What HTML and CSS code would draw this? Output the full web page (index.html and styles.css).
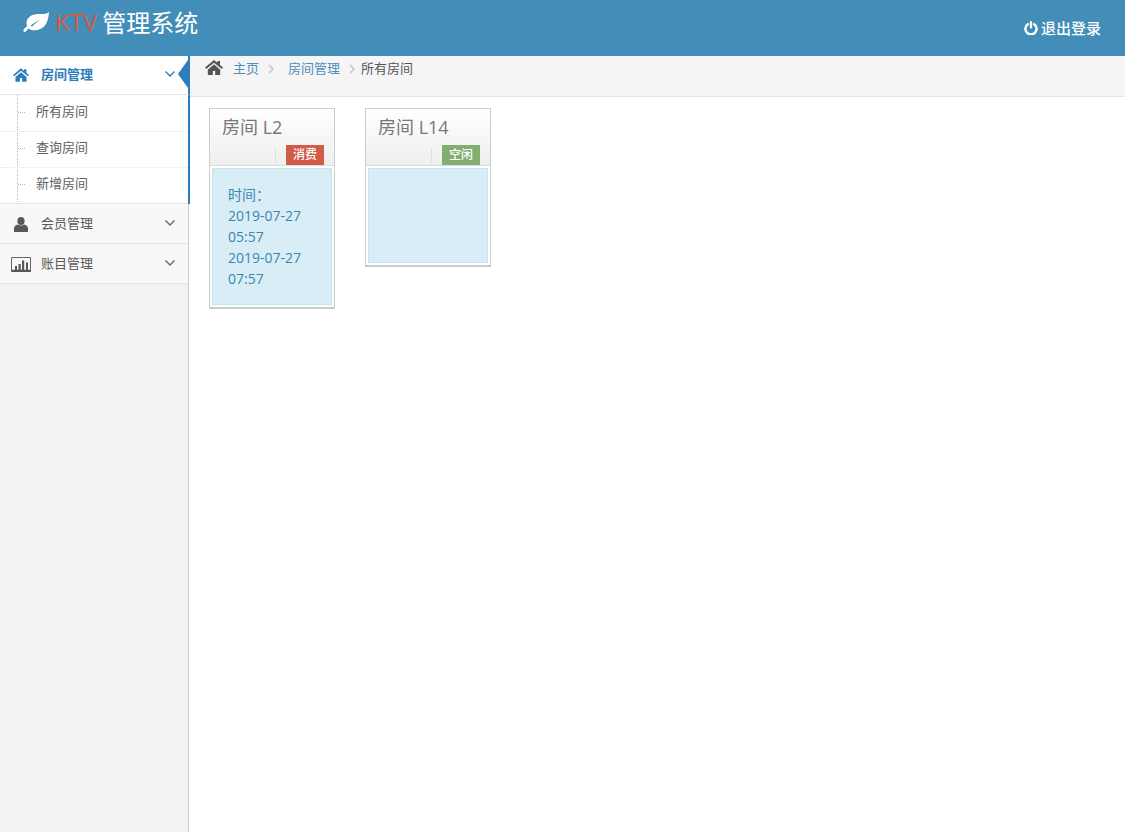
FILE: index.html
```html
<!DOCTYPE html>
<html lang="zh">
<head>
<meta charset="utf-8">
<title>KTV管理系统</title>
<link rel="stylesheet" href="styles.css">
</head>
<body>
<header class="navbar">
  <div class="brand">
    <svg class="leaf" viewBox="0 0 26 20" width="26" height="20"><path fill="#fff" d="M26 0c-3 2.500-6 2-10.500 2C8 2 3.500 6 3.500 11c0 1 .2 2 .6 3C2.800 15 1.600 16.300.6 17.600 0 18.500.5 20 1.800 20c.6 0 1-.3 1.400-.9.700-1 1.500-1.900 2.400-2.700 1.400 1.200 3.400 1.900 5.900 1.800C19.500 18 23 13 24.500 8.500 25.300 6 25.800 3 26 0zM7.500 13.800c2.500-2.400 5.500-4.300 9.500-5.600-3 1.700-5.500 3.600-7.800 6.300z"/></svg>
    <span class="brand-ktv">KTV</span><span class="brand-name">管理系统</span>
  </div>
  <a class="logout">
    <svg viewBox="0 0 14 14" width="14" height="14"><path fill="none" stroke="#fff" stroke-width="2.400" stroke-linecap="round" d="M3.800 3.200A5.600 5.600 0 1 0 10.200 3.200M7 1.200v5"/></svg>
    <span>退出登录</span>
  </a>
</header>
<div class="layout">
  <aside class="sidebar">
    <div class="menu-item active">
      <svg class="menu-icon home" viewBox="0 0 18 15" width="16" height="14"><path fill="#2b7dbc" d="M9 0 0 7.500l1.200 1.500L9 2.800 16.800 9 18 7.500l-3-2.500V1h-2.700v1.800L9 0zM2.800 9.700V15h5v-4h2.400v4h5V9.700L9 4.300 2.800 9.700z"/></svg>
      <span class="menu-label">房间管理</span>
      <svg class="chev" viewBox="0 0 10 6" width="10" height="6"><path fill="none" stroke="#2b7dbc" stroke-width="1.300" d="M.5.500 5 5 9.500.500"/></svg>
      <i class="pointer"></i>
    </div>
    <ul class="submenu">
      <li>所有房间</li>
      <li>查询房间</li>
      <li>新增房间</li>
    </ul>
    <div class="menu-item">
      <svg class="menu-icon person" viewBox="0 0 14 15" width="14" height="15"><ellipse cx="7" cy="4" rx="3.600" ry="4" fill="#585858"/><path fill="#585858" d="M0 15v-3.500C0 9 2 8.300 4 7.500c1.700 1.300 4.300 1.300 6 0 2 .8 4 1.500 4 4V15z"/></svg>
      <span class="menu-label">会员管理</span>
      <svg class="chev" viewBox="0 0 10 6" width="10" height="6"><path fill="none" stroke="#666" stroke-width="1.300" d="M.5.500 5 5 9.500.500"/></svg>
    </div>
    <div class="menu-item">
      <svg class="menu-icon chart" viewBox="0 0 20 15" width="20" height="15"><path fill="none" stroke="#666" stroke-width="1" d="M.5.500h19v14H.5z"/><path fill="#585858" d="M.5 12.800h19V15H.5zM4 9h2v4H4zM7.500 7h2.200v6H7.500zM11 3.500h2.200V13H11zM15 5.500h2V13h-2z"/></svg>
      <span class="menu-label">账目管理</span>
      <svg class="chev" viewBox="0 0 10 6" width="10" height="6"><path fill="none" stroke="#666" stroke-width="1.300" d="M.5.500 5 5 9.500.500"/></svg>
    </div>
  </aside>
  <main class="content">
    <nav class="breadcrumbs">
      <svg class="crumb-home" viewBox="0 0 18 15" width="18" height="15"><path fill="#555" d="M9 0 0 7.500l1.200 1.500L9 2.800 16.800 9 18 7.500l-3-2.500V1h-2.700v1.800L9 0zM2.800 9.700V15h5v-4h2.400v4h5V9.700L9 4.300 2.800 9.700z"/></svg>
      <a class="crumb-link">主页</a>
      <svg class="crumb-sep" viewBox="0 0 6 10" width="6" height="10"><path fill="none" stroke="#c4c4c4" stroke-width="1.500" d="M1 1l4 4-4 4"/></svg>
      <a class="crumb-link">房间管理</a>
      <svg class="crumb-sep tight" viewBox="0 0 6 10" width="6" height="10"><path fill="none" stroke="#c4c4c4" stroke-width="1.500" d="M1 1l4 4-4 4"/></svg>
      <span class="crumb-current">所有房间</span>
    </nav>
    <div class="rooms">
      <section class="room">
        <div class="room-head">
          <h5>房间 L2</h5>
          <div class="room-tools"><i class="divider"></i><span class="badge busy">消费</span></div>
        </div>
        <div class="room-body">
          <div class="alert">时间：<br>2019-07-27<br>05:57<br>2019-07-27<br>07:57</div>
        </div>
      </section>
      <section class="room">
        <div class="room-head">
          <h5>房间 L14</h5>
          <div class="room-tools"><i class="divider"></i><span class="badge free">空闲</span></div>
        </div>
        <div class="room-body">
          <div class="alert empty"></div>
        </div>
      </section>
    </div>
  </main>
</div>
</body>
</html>
```
FILE: styles.css
```css
* { box-sizing: border-box; }
html, body { margin: 0; height: 100%; }
body {
  width: 1125px;
  height: 832px;
  overflow: hidden;
  font-family: "Open Sans", "Noto Sans CJK SC", sans-serif;
  font-size: 13px;
  color: #393939;
  background: #fff;
}
.navbar {
  height: 56px;
  background: #438eb9;
  display: flex;
  justify-content: space-between;
  color: #fff;
}
.brand {
  display: flex;
  align-items: center;
  height: 43px;
  padding-left: 23px;
  font-size: 24px;
  line-height: 43px;
}
.leaf { margin-right: 6px; }
.brand-ktv { color: #d15b47; font-size: 24px; margin-right: 5px; font-family: "Open Sans", sans-serif; font-weight: 400; }
.brand-name { font-family: "Noto Sans CJK SC", sans-serif; }
.logout {
  display: flex;
  align-items: center;
  gap: 3px;
  height: 55px;
  padding-right: 24px;
  font-size: 15px;
  font-weight: 500;
}
.layout { display: flex; height: 776px; }
.sidebar {
  width: 189px;
  flex: none;
  background: #f2f2f2;
  border-right: 1px solid #ccc;
}
.menu-item {
  position: relative;
  z-index: 1;
  height: 40px;
  display: flex;
  align-items: center;
  padding-bottom: 3px;
  background: #f8f8f8;
  border-bottom: 1px solid #e5e5e5;
  color: #585858;
}
.menu-icon { position: absolute; top: 13px; }
.menu-icon.home { left: 13px; top: 12px; }
.menu-icon.person { left: 14px; }
.menu-icon.chart { left: 11px; }
.menu-label { margin-left: 41px; font-size: 13px; }
.chev { position: absolute; right: 13px; top: 16px; }
.menu-item.active {
  background: #fff;
  height: 39px;
  padding-bottom: 3px;
  border-right: 2px solid #2b7dbc;
  margin-right: -2px;
  color: #2b7dbc;
  font-weight: 700;
}
.menu-item.active .chev { top: 15px; }
.pointer {
  position: absolute;
  right: 0;
  top: 4px;
  width: 10px;
  height: 28px;
  background: #2b7dbc;
  clip-path: polygon(100% 0, 0 50%, 100% 100%);
}
.submenu {
  list-style: none;
  margin: 0 -2px 0 0;
  padding: 1px 0 0;
  background: #fff;
  border-right: 2px solid #2b7dbc;
  position: relative;
  z-index: 1;
}
.submenu::before {
  content: "";
  position: absolute;
  left: 17px;
  top: 0;
  bottom: 0;
  border-left: 1px dotted #9dbdd6;
}
.submenu li {
  position: relative;
  height: 36px;
  line-height: 31px;
  padding-left: 36px;
  color: #616161;
  font-size: 13px;
  border-bottom: 1px dotted #e4e4e4;
}
.submenu li:last-child { border-bottom: 1px solid #e5e5e5; }
.submenu li::before {
  content: "";
  position: absolute;
  left: 18px;
  top: 16px;
  width: 7px;
  border-top: 1px dotted #9dbdd6;
}
.content { flex: 1; min-width: 0; }
.breadcrumbs {
  height: 41px;
  background: #f5f5f5;
  border-bottom: 1px solid #e5e5e5;
  display: flex;
  align-items: flex-start;
  padding-left: 16px;
  line-height: 24px;
  font-size: 13px;
}
.crumb-home { margin-top: 4px; margin-right: 10px; }
.crumb-link { color: #4c8fbd; }
.crumb-sep { margin: 8px 14px 0 9px; }
.crumb-sep.tight { margin: 8px 6px 0 9px; }
.crumb-current { color: #555; }
.rooms {
  display: flex;
  align-items: flex-start;
  gap: 30px;
  padding: 11px 20px;
}
.room {
  width: 126px;
  border: 1px solid #ccc;
  border-bottom-width: 2px;
  background: #fff;
}
.room-head {
  height: 57px;
  background: linear-gradient(#fff, #eee);
  border-bottom: 1px solid #ddd;
  position: relative;
}
.room-head h5 {
  margin: 0;
  padding: 5px 0 0 12px;
  font-size: 18px;
  font-weight: 400;
  line-height: 26px;
  color: #777;
}
.room-tools {
  position: absolute;
  top: 36px;
  right: 10px;
  display: flex;
  align-items: flex-start;
}
.divider {
  display: block;
  width: 1px;
  height: 14px;
  margin: 3px 10px 0 0;
  background: #ddd;
}
.badge {
  display: block;
  width: 38px;
  height: 20px;
  line-height: 19px;
  text-align: center;
  color: #fff;
  font-size: 12px;
  font-weight: 500;
}
.busy { background: #d15b47; }
.free { background: #82af6f; }
.room-body { padding: 2px; }
.alert {
  background: #d9edf7;
  border: 1px solid #bce8f1;
  color: #3a87ad;
  padding: 15px;
  font-size: 14px;
  line-height: 21px;
  height: 137px;
}
.alert.empty { height: 95px; }
```
